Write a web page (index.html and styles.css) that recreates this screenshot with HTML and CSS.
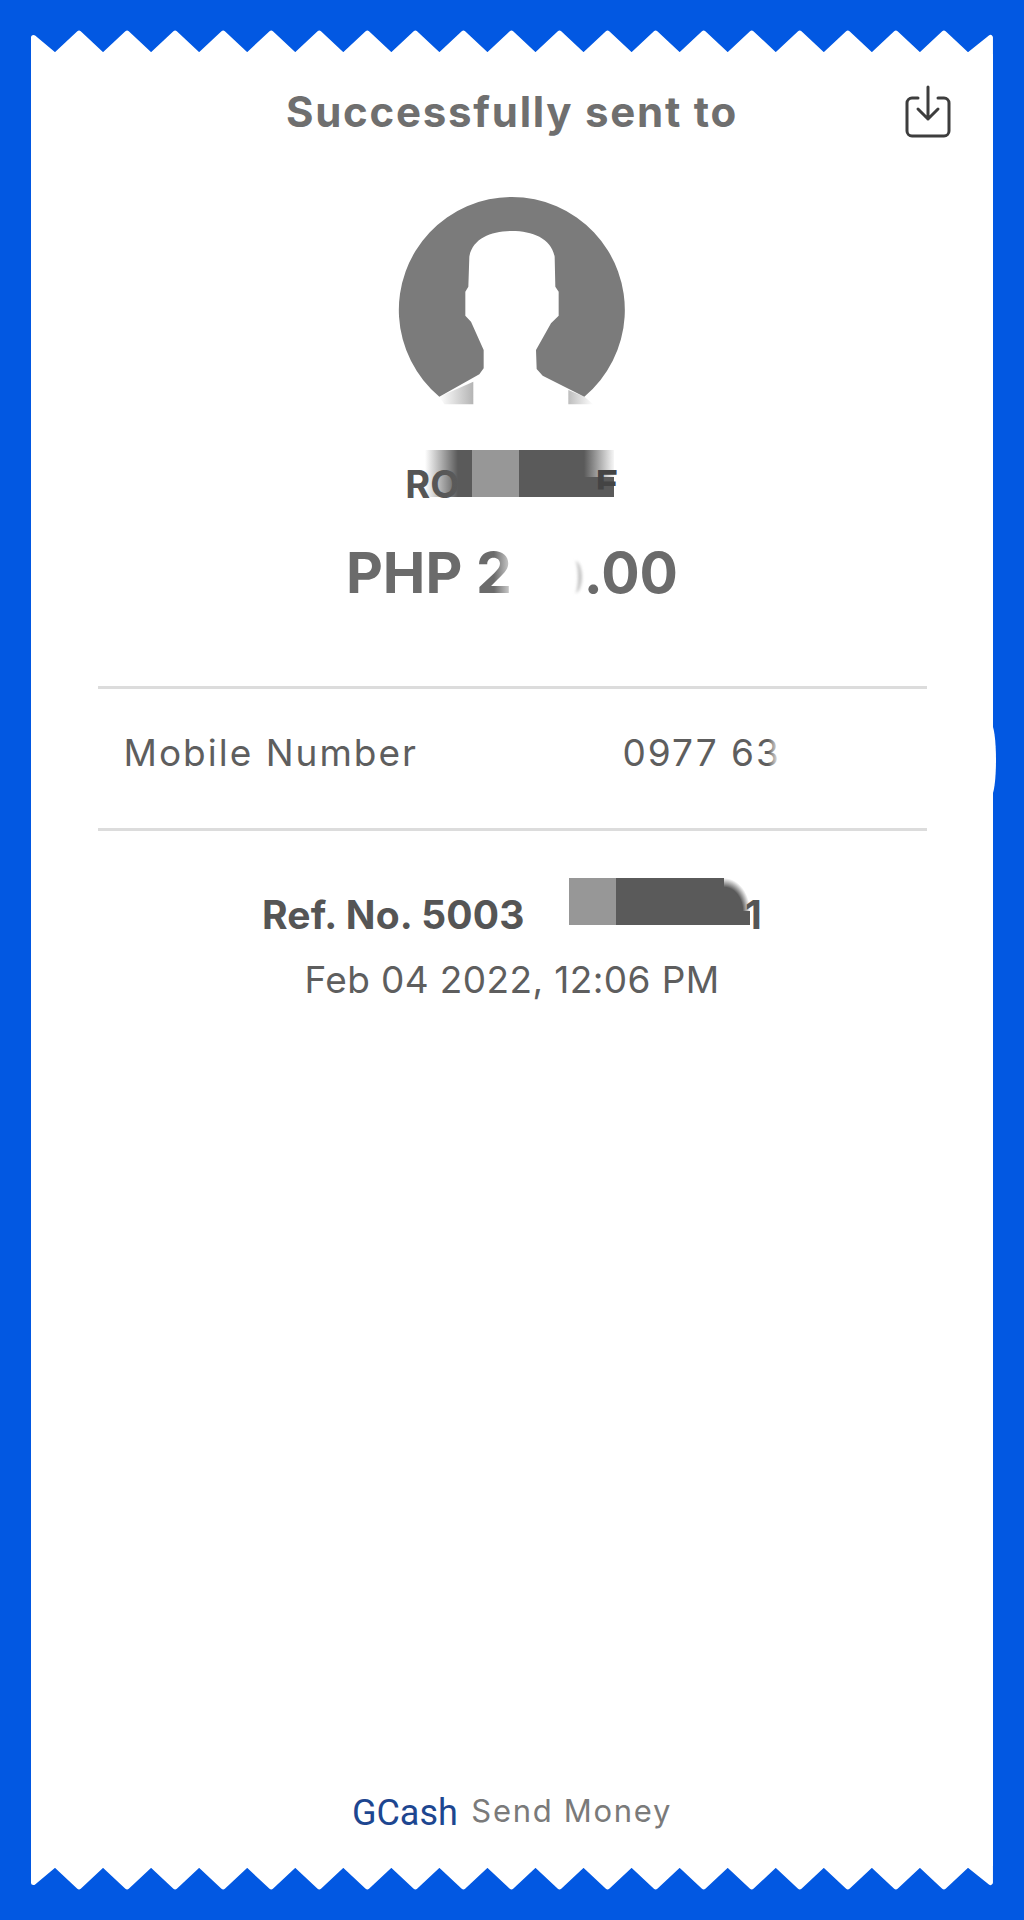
FILE: index.html
```html
<!DOCTYPE html>
<html lang="en">
<head>
<meta charset="utf-8">
<title>GCash Send Money receipt</title>
<link rel="stylesheet" href="styles.css">
</head>
<body>
<svg class="defs" width="0" height="0" aria-hidden="true">
  <symbol id="zig" viewBox="0 0 962 26">
    <path fill="#fff" stroke="#fff" stroke-width="5" stroke-linejoin="round" d="M2.5 26V7.5L24 25.5l24.025-22.5 24.025 22.5 24.025-22.5 24.025 22.5 24.025-22.5 24.025 22.5 24.025-22.5 24.025 22.5 24.025-22.5 24.025 22.5 24.025-22.5 24.025 22.5 24.025-22.5 24.025 22.5 24.025-22.5 24.025 22.5 24.025-22.5 24.025 22.5 24.025-22.5 24.025 22.5 24.025-22.5 24.025 22.5 24.025-22.5 24.025 22.5 24.025-22.5 24.025 22.5 24.025-22.5 24.025 22.5 24.025-22.5 24.025 22.5 24.025-22.5 24.025 22.5 24.025-22.5 24.025 22.5 24.025-22.5 24.025 22.5 24.025-22.5 24.025 22.5 22.5-18V26z"/>
  </symbol>
</svg>
<main class="page">
  <svg class="zigzag zig-top" width="962" height="26"><use href="#zig"/></svg>
  <section class="receipt">
    <header class="head">
      <span></span>
      <h1 class="title">Successfully sent to</h1>
      <svg class="save" width="48" height="54" viewBox="0 0 48 54" fill="none" stroke="#3d3d3d" stroke-width="3" stroke-linecap="round" stroke-linejoin="round">
        <path d="M14 14H8a5 5 0 0 0-5 5v28a5 5 0 0 0 5 5h32a5 5 0 0 0 5-5V19a5 5 0 0 0-5-5h-6"/>
        <path d="M24 3v32M14 25l10 10 10-10"/>
      </svg>
    </header>

    <svg class="avatar" width="240" height="230" viewBox="300 130 720 690">
      <defs>
        <linearGradient id="fadeL" x1="0" x2="1" y1="0" y2="0"><stop offset="0" stop-color="#fff"/><stop offset="1" stop-color="#b4b4b4"/></linearGradient>
        <linearGradient id="fadeR" x1="0" x2="1" y1="0" y2="0"><stop offset="0" stop-color="#bdbdbd"/><stop offset="1" stop-color="#fff"/></linearGradient>
      </defs>
      <g transform="translate(202 90)">
        <path fill="url(#fadeL)" d="M240 645 342 600V668H255z"/>
        <path fill="url(#fadeR)" d="M627 625 675 645 702 668H627z"/>
        <path fill="#7b7b7b" d="M240 645A339 339 0 1 1 675 645L550 582 532 562 530 505 575 425 598 402V330L588 315 586 225C575 170 520 148 458 148S340 170 330 225L327 315 318 330V402L335 420 373 505 373 560 360 578z"/>
      </g>
    </svg>

    <div class="name">
      <span>RO</span>
      <span class="name-gap"></span>
      <div class="blur blur-name">
        <span class="b-in"></span>
        <span class="b-cell b-light"></span>
        <span class="b-wide b-out"></span>
      </div>
      <span class="name-end">E</span>
    </div>

    <div class="amount">
      <span>PHP 2</span><span class="amount-gap"></span><span>.00</span>
      <span class="wipe wipe-amount"></span>
      <span class="smudge"></span>
    </div>

    <div class="detail">
      <span class="detail-label">Mobile Number</span>
      <span class="detail-value">0977 639<span class="wipe wipe-mobile"></span></span>
    </div>

    <div class="ref">
      <span class="ref-start">Ref. No. 5003</span>
      <span class="ref-gap"></span>
      <span class="ref-end">1</span>
      <div class="blur blur-ref">
        <span class="b-cell b-light"></span>
        <span class="b-cell b-dark"></span>
        <span class="b-wide b-corner"></span>
      </div>
    </div>
    <div class="date">Feb 04 2022, 12:06 PM</div>

    <footer class="foot">
      <span class="brand">GCash</span>
      <span class="service">Send Money</span>
    </footer>
    <span class="bulge"></span>
  </section>
  <svg class="zigzag zig-bottom" width="962" height="26"><use href="#zig"/></svg>
</main>
</body>
</html>
```
FILE: styles.css
```css
* { box-sizing: border-box; }
html, body { margin: 0; padding: 0; }
body { background: #0258e2; font-family: Inter, "Liberation Sans", sans-serif; }
.defs { position: absolute; }
.page {
  width: 1024px;
  height: 1920px;
  padding: 30px 31px;
  display: flex;
  flex-direction: column;
  overflow: hidden;
}
.zigzag { display: block; flex: none; filter: blur(.5px); }
.zig-top { margin-bottom: -2px; }
.zig-bottom { margin-top: -2px; transform: scaleY(-1); }
.receipt {
  flex: 1;
  position: relative;
  background: #fff;
  display: flex;
  flex-direction: column;
  align-items: center;
}
.head {
  width: 100%;
  display: grid;
  grid-template-columns: 1fr auto 1fr;
  align-items: start;
  padding: 30px 41px 0;
}
.title {
  margin: 3px 0 0;
  font-size: 42px;
  font-weight: 700;
  line-height: 50px;
  letter-spacing: 1.75px;
  color: #6f6f6f;
  white-space: nowrap;
}
.save { justify-self: end; }
.avatar { display: block; margin-top: 57px; }
.name {
  position: relative;
  display: flex;
  margin-top: 36px;
  font-size: 38px;
  line-height: 46px;
  font-weight: 700;
  color: #555;
}
.name-gap { width: 136px; }
.name-end { position: relative; color: #444; clip-path: inset(0 0 38% 0); }
.blur { position: absolute; display: flex; }
.blur-name { left: 20px; top: -11px; width: 189px; height: 47px; }
.b-in, .b-cell { width: 47px; flex: none; }
.b-wide { flex: 1; }
.b-dark { background: #5a5a5a; }
.b-in { background: linear-gradient(to right, rgba(90,90,90,0), #5a5a5a 70%); }
.b-light { background: #979797; }
.b-out {
  background:
    linear-gradient(#5a5a5a, #5a5a5a) left top / calc(100% - 30px) 100% no-repeat,
    linear-gradient(#5a5a5a, #5a5a5a) left bottom / 100% 20px no-repeat,
    linear-gradient(to right, #5a5a5a, rgba(90,90,90,.05)) right top / 30px 27px no-repeat;
}
.b-corner {
  background:
    linear-gradient(#5a5a5a, #5a5a5a) left top / calc(100% - 26px) 100% no-repeat,
    linear-gradient(#5a5a5a, #5a5a5a) left bottom / 100% 14px no-repeat,
    radial-gradient(ellipse 26px 33px at 0 33px, #5a5a5a 72%, rgba(90,90,90,0) 100%) right top / 26px 33px no-repeat;
}
.amount {
  position: relative;
  display: flex;
  margin-top: 30px;
  font-size: 57px;
  font-weight: 700;
  line-height: 72px;
  color: #6b6b6b;
  white-space: pre;
}
.amount-gap { width: 72px; }
.wipe { position: absolute; }
.wipe-amount {
  left: 148px;
  top: 6px;
  width: 24px;
  height: 60px;
  background: linear-gradient(to right, rgba(255,255,255,0), #fff);
}
.smudge {
  position: absolute;
  left: 222px;
  top: 24px;
  width: 14px;
  height: 32px;
  border-right: 4px solid #c4c4c4;
  border-radius: 50%;
  filter: blur(1.5px);
}
.detail {
  width: 829px;
  height: 145px;
  margin-top: 77px;
  border-top: 3px solid #dcdcdc;
  border-bottom: 3px solid #dcdcdc;
  padding: 0 26px 12px;
  display: grid;
  grid-template-columns: 499px 1fr;
  align-items: center;
  font-size: 37px;
  letter-spacing: 2px;
  color: #5e5e5e;
}
.detail-value { position: relative; white-space: nowrap; }
.wipe-mobile {
  left: 145px;
  top: -6px;
  width: 80px;
  height: 56px;
  background: linear-gradient(to right, rgba(255,255,255,0), #fff 12px);
}
.ref {
  position: relative;
  display: flex;
  width: 500px;
  margin-top: 60px;
  font-size: 39px;
  font-weight: 700;
  line-height: 48px;
  letter-spacing: .2px;
  color: #555;
  white-space: nowrap;
}
.ref-gap { flex: 1; }
.ref-end { align-self: flex-end; }
.blur-ref { left: 307px; top: -13px; width: 181px; height: 47px; }
.date {
  margin-top: 19px;
  font-size: 37px;
  line-height: 44px;
  letter-spacing: .4px;
  color: #5e5e5e;
  white-space: nowrap;
}
.foot {
  margin-top: auto;
  margin-bottom: 32px;
  white-space: nowrap;
}
.brand { font-family: Roboto, sans-serif; font-size: 36px; color: #1d4690; }
.service {
  margin-left: 9px;
  vertical-align: 3px;
  font-size: 31px;
  letter-spacing: 1.7px;
  color: #7a7a7a;
}
.bulge {
  position: absolute;
  right: -3px;
  top: 670px;
  width: 10px;
  height: 72px;
  border-radius: 50%;
  background: #fff;
  filter: blur(.6px);
}
```
